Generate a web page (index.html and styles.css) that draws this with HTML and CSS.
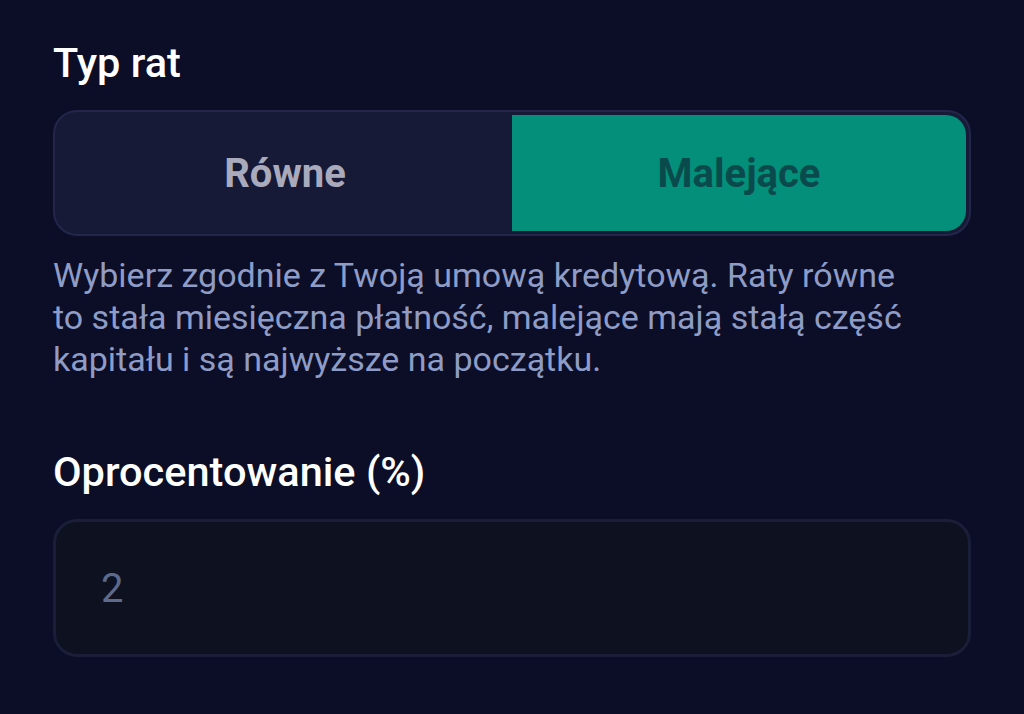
FILE: index.html
```html
<!DOCTYPE html>
<html lang="pl">
<head>
    <meta charset="UTF-8">
    <meta name="viewport" content="width=device-width, initial-scale=1.0">
    <title>Typ rat</title>
    <link rel="stylesheet" href="styles.css">
</head>
<body>
    <div class="field">
        <div class="field-label">Typ rat</div>
        <div class="toggle">
            <button class="toggle-option">Równe</button>
            <button class="toggle-option active">Malejące</button>
        </div>
        <p class="field-hint">Wybierz zgodnie z Twoją umową kredytową. Raty równe to stała miesięczna płatność, malejące mają stałą część kapitału i są najwyższe na początku.</p>
    </div>

    <div class="field">
        <div class="field-label">Oprocentowanie (%)</div>
        <input class="text-input" type="text" placeholder="2">
    </div>
</body>
</html>
```

FILE: styles.css
```css
body {
    font-family: Roboto, 'Noto Sans', sans-serif;
    margin: 0;
    padding: 37px 53px 0;
    background-color: #0b0e26;
    color: #fff;
}
.field {
    margin-bottom: 66px;
}
.field-label {
    font-size: 41.5px;
    font-weight: 500;
    line-height: 52px;
    margin-bottom: 21px;
}
.toggle {
    display: flex;
    padding: 3px;
    background: #171a36;
    border: 2px solid #23264a;
    border-radius: 24px;
}
.toggle-option {
    flex: 1;
    height: 116px;
    border: none;
    background: transparent;
    font-family: inherit;
    font-size: 40px;
    font-weight: 700;
    color: #a9abbd;
    padding: 0;
}
.toggle-option.active {
    background: #038f7a;
    color: #0b4a4c;
    border-radius: 0 20px 20px 0;
}
.field-hint {
    margin: 18px 0 0;
    max-width: 872px;
    font-size: 34px;
    line-height: 42px;
    color: #8e9cc6;
}
.text-input {
    display: block;
    box-sizing: border-box;
    width: 100%;
    height: 138px;
    padding: 0 45px;
    background: #0e1120;
    border: 3px solid #1b1e38;
    border-radius: 24px;
    font-family: inherit;
    font-size: 40px;
    color: #fff;
    outline: none;
}
.text-input::placeholder {
    color: #5e6a8c;
}
```
